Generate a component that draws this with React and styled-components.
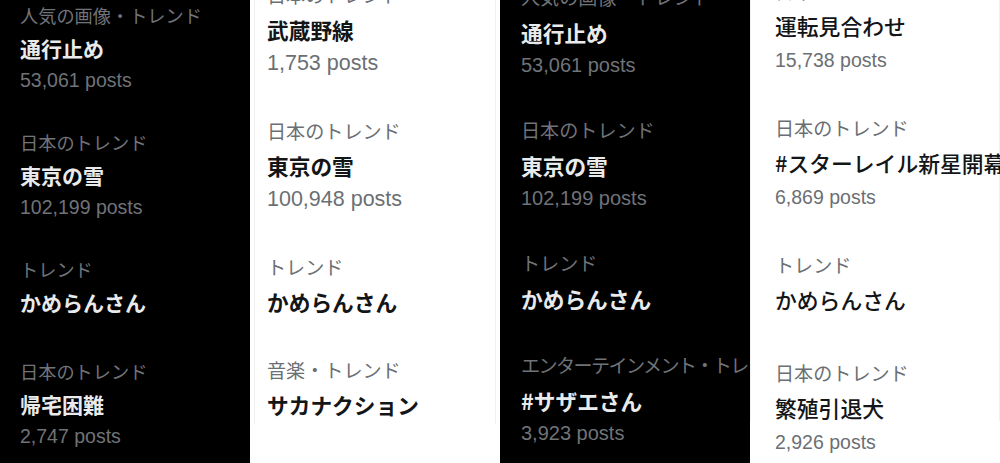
import React from 'react'
import styled, { createGlobalStyle } from 'styled-components'

const GlobalStyle = createGlobalStyle`
  html, body {
    margin: 0;
    padding: 0;
    background: #000;
  }
  body {
    font-family: "Noto Sans CJK JP", "Noto Sans", sans-serif;
  }
`

const themes = {
  dark: { bg: '#000000', title: '#e9eaeb', muted: '#707378', line: 'transparent' },
  light: { bg: '#ffffff', title: '#131517', muted: '#6b6f74', line: '#f1f1f1' },
}

const Strip = styled.div`
  display: grid;
  grid-template-columns: repeat(4, 250px);
  width: 1000px;
  height: 463px;
  overflow: hidden;
`

const Panel = styled.div`
  background: ${(p) => themes[p.$tone].bg};
  height: 463px;
  overflow: hidden;
  padding: 0 ${(p) => p.$inset}px;
`

const Frame = styled.div`
  height: 100%;
  border-left: 1px solid ${(p) => themes[p.$tone].line};
  border-right: 1px solid ${(p) => themes[p.$tone].line};
`

const List = styled.ul`
  list-style: none;
  margin: ${(p) => p.$top}px 0 0;
  padding: 0 0 0 ${(p) => p.$left}px;
  white-space: nowrap;
`

const Item = styled.li`
  padding: ${(p) => p.$pad / 2}px 0;
`

const Category = styled.div`
  font-size: ${(p) => p.$size}px;
  line-height: ${(p) => p.$lh}px;
  color: ${(p) => themes[p.$tone].muted};
  font-weight: 400;
  letter-spacing: ${(p) => (p.$tight ? '-1.6px' : 'normal')};
`

const Title = styled.div`
  font-size: ${(p) => p.$size}px;
  line-height: ${(p) => p.$lh}px;
  color: ${(p) => themes[p.$tone].title};
  font-weight: ${(p) => p.$weight};
`

const Posts = styled.div`
  font-family: "Liberation Sans", Arial, sans-serif;
  font-size: ${(p) => p.$size}px;
  line-height: ${(p) => p.$lh}px;
  color: ${(p) => themes[p.$tone].muted};
`

const columns = [
  {
    tone: 'dark', inset: 0, left: 19, top: -17,
    cat: [18.2, 28], title: [21, 39, 700], posts: [19.5, 25], pad: 35,
    items: [
      { cat: '人気の画像・トレンド', title: '通行止め', posts: '53,061 posts' },
      { cat: '日本のトレンド', title: '東京の雪', posts: '102,199 posts' },
      { cat: 'トレンド', title: 'かめらんさん' },
      { cat: '日本のトレンド', title: '帰宅困難', posts: '2,747 posts' },
    ],
  },
  {
    tone: 'light', inset: 4, left: 12, top: -39,
    cat: [19.1, 35], title: [21.7, 34, 700], posts: [21.5, 33], pad: 34,
    items: [
      { cat: '日本のトレンド', title: '武蔵野線', posts: '1,753 posts' },
      { cat: '日本のトレンド', title: '東京の雪', posts: '100,948 posts' },
      { cat: 'トレンド', title: 'かめらんさん' },
      { cat: '音楽・トレンド', title: 'サカナクション' },
      { cat: '日本のトレンド', title: '' },
    ],
  },
  {
    tone: 'dark', inset: 0, left: 20, top: -37,
    cat: [19.1, 38], title: [21.7, 34, 700], posts: [20, 31], pad: 30,
    items: [
      { cat: '人気の画像・トレンド', title: '通行止め', posts: '53,061 posts' },
      { cat: '日本のトレンド', title: '東京の雪', posts: '102,199 posts' },
      { cat: 'トレンド', title: 'かめらんさん' },
      { cat: 'エンターテインメント・トレンド', title: '#サザエさん', posts: '3,923 posts', tight: true },
    ],
  },
  {
    tone: 'light', inset: 0, left: 24, top: -42,
    cat: [19.1, 27], title: [21.8, 41, 500], posts: [19.5, 29], pad: 40,
    items: [
      { cat: '日本のトレンド', title: '運転見合わせ', posts: '15,738 posts' },
      { cat: '日本のトレンド', title: '#スターレイル新星開幕', posts: '6,869 posts' },
      { cat: 'トレンド', title: 'かめらんさん' },
      { cat: '日本のトレンド', title: '繁殖引退犬', posts: '2,926 posts' },
    ],
  },
]

function TrendColumn({ col }) {
  const t = col.tone
  return (
    <Panel $tone={t} $inset={col.inset}>
      <Frame $tone={t}>
        <List $top={col.top} $left={col.left}>
          {col.items.map((it, i) => (
            <Item key={i} $pad={col.pad}>
              <Category $tone={t} $size={col.cat[0]} $lh={col.cat[1]} $tight={it.tight}>
                {it.cat}
              </Category>
              <Title $tone={t} $size={col.title[0]} $lh={col.title[1]} $weight={col.title[2]}>
                {it.title}
              </Title>
              {it.posts && (
                <Posts $tone={t} $size={col.posts[0]} $lh={col.posts[1]}>{it.posts}</Posts>
              )}
            </Item>
          ))}
        </List>
      </Frame>
    </Panel>
  )
}

export default function App() {
  return (
    <>
      <GlobalStyle />
      <Strip>
        {columns.map((c, i) => (
          <TrendColumn key={i} col={c} />
        ))}
      </Strip>
    </>
  )
}
